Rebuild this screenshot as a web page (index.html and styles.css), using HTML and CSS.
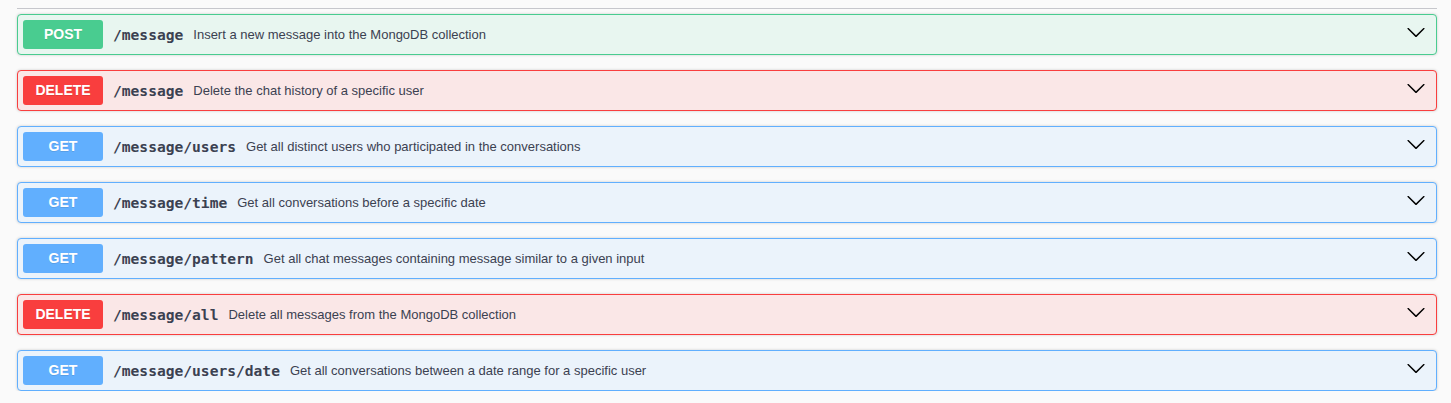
FILE: index.html
```html
<!DOCTYPE html>
<html>
<head>
<meta charset="utf-8">
<link rel="stylesheet" href="styles.css">
</head>
<body>
<div class="wrap">
  <div class="rule"></div>
  <div class="ops">
    <div class="op post">
      <span class="method">POST</span>
      <span class="path">/message</span>
      <span class="desc">Insert a new message into the MongoDB collection</span>
      <svg class="arrow" viewBox="0 0 20 20" width="20" height="20"><path d="M17.418 6.109c.272-.268.709-.268.979 0s.271.701 0 .969l-7.908 7.83c-.27.268-.707.268-.979 0l-7.908-7.83c-.27-.268-.27-.701 0-.969.271-.268.709-.268.979 0L10 13.25l7.418-7.141z"/></svg>
    </div>
    <div class="op delete">
      <span class="method">DELETE</span>
      <span class="path">/message</span>
      <span class="desc">Delete the chat history of a specific user</span>
      <svg class="arrow" viewBox="0 0 20 20" width="20" height="20"><path d="M17.418 6.109c.272-.268.709-.268.979 0s.271.701 0 .969l-7.908 7.83c-.27.268-.707.268-.979 0l-7.908-7.83c-.27-.268-.27-.701 0-.969.271-.268.709-.268.979 0L10 13.25l7.418-7.141z"/></svg>
    </div>
    <div class="op get">
      <span class="method">GET</span>
      <span class="path">/message/users</span>
      <span class="desc">Get all distinct users who participated in the conversations</span>
      <svg class="arrow" viewBox="0 0 20 20" width="20" height="20"><path d="M17.418 6.109c.272-.268.709-.268.979 0s.271.701 0 .969l-7.908 7.83c-.27.268-.707.268-.979 0l-7.908-7.83c-.27-.268-.27-.701 0-.969.271-.268.709-.268.979 0L10 13.25l7.418-7.141z"/></svg>
    </div>
    <div class="op get">
      <span class="method">GET</span>
      <span class="path">/message/time</span>
      <span class="desc">Get all conversations before a specific date</span>
      <svg class="arrow" viewBox="0 0 20 20" width="20" height="20"><path d="M17.418 6.109c.272-.268.709-.268.979 0s.271.701 0 .969l-7.908 7.83c-.27.268-.707.268-.979 0l-7.908-7.83c-.27-.268-.27-.701 0-.969.271-.268.709-.268.979 0L10 13.25l7.418-7.141z"/></svg>
    </div>
    <div class="op get">
      <span class="method">GET</span>
      <span class="path">/message/pattern</span>
      <span class="desc">Get all chat messages containing message similar to a given input</span>
      <svg class="arrow" viewBox="0 0 20 20" width="20" height="20"><path d="M17.418 6.109c.272-.268.709-.268.979 0s.271.701 0 .969l-7.908 7.83c-.27.268-.707.268-.979 0l-7.908-7.83c-.27-.268-.27-.701 0-.969.271-.268.709-.268.979 0L10 13.25l7.418-7.141z"/></svg>
    </div>
    <div class="op delete">
      <span class="method">DELETE</span>
      <span class="path">/message/all</span>
      <span class="desc">Delete all messages from the MongoDB collection</span>
      <svg class="arrow" viewBox="0 0 20 20" width="20" height="20"><path d="M17.418 6.109c.272-.268.709-.268.979 0s.271.701 0 .969l-7.908 7.83c-.27.268-.707.268-.979 0l-7.908-7.83c-.27-.268-.27-.701 0-.969.271-.268.709-.268.979 0L10 13.25l7.418-7.141z"/></svg>
    </div>
    <div class="op get">
      <span class="method">GET</span>
      <span class="path">/message/users/date</span>
      <span class="desc">Get all conversations between a date range for a specific user</span>
      <svg class="arrow" viewBox="0 0 20 20" width="20" height="20"><path d="M17.418 6.109c.272-.268.709-.268.979 0s.271.701 0 .969l-7.908 7.83c-.27.268-.707.268-.979 0l-7.908-7.83c-.27-.268-.27-.701 0-.969.271-.268.709-.268.979 0L10 13.25l7.418-7.141z"/></svg>
    </div>
  </div>
</div>
</body>
</html>
```
FILE: styles.css
```css
html, body {
  margin: 0;
  padding: 0;
  background: #fafafa;
}
.wrap {
  width: 1420px;
  padding: 8px 0 0 17px;
}
.rule {
  border-top: 1px solid #c6c7cc;
  margin-bottom: 5px;
}
.ops {
  display: flex;
  flex-direction: column;
  gap: 15px;
}
.op {
  display: flex;
  align-items: center;
  height: 39px;
  padding: 0 5px;
  border: 1px solid;
  border-radius: 4px;
  box-shadow: 0 0 3px rgba(0, 0, 0, 0.19);
  box-sizing: content-box;
}
.op.post { background: #e8f6f0; border-color: #49cc90; }
.op.delete { background: #fae7e7; border-color: #f93e3e; }
.op.get { background: #ebf3fb; border-color: #61affe; }
.method {
  width: 80px;
  height: 29px;
  text-align: center;
  border-radius: 3px;
  color: #fff;
  font: bold 14px "Liberation Sans", Arial, sans-serif;
  line-height: 29px;
  text-shadow: 0 1px 0 rgba(0, 0, 0, 0.1);
  flex: none;
}
.post .method { background: #49cc90; }
.delete .method { background: #f93e3e; }
.get .method { background: #61affe; }
.path {
  padding: 0 10px;
  font: bold 14.6px "DejaVu Sans Mono", monospace;
  color: #3b4151;
  margin-top: -1px;
}
.desc {
  flex: 1;
  font: 13px "Liberation Sans", Arial, sans-serif;
  color: #3b4151;
}
.arrow {
  flex: none;
  margin: 0 5px 6px 0;
  fill: #000;
}
```
